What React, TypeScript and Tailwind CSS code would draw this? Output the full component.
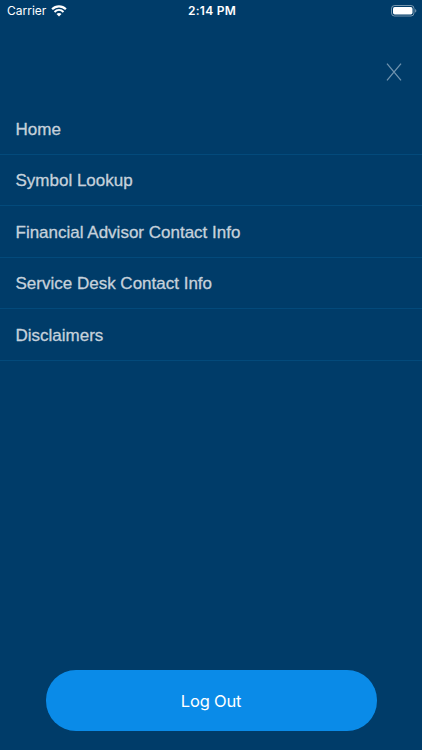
import { useState } from 'react';

const MENU_ITEMS = [
  'Home',
  'Symbol Lookup',
  'Financial Advisor Contact Info',
  'Service Desk Contact Info',
  'Disclaimers',
];

function WifiIcon() {
  return (
    <svg width="16" height="12" viewBox="0 0 16 12" fill="none" aria-hidden="true">
      <path d="M1.1 4.3C5 .5 11 .5 14.9 4.3" stroke="white" strokeWidth="2.2" />
      <path d="M3.5 6.9C6.1 4.5 9.9 4.5 12.5 6.9" stroke="white" strokeWidth="2" />
      <path d="M5.5 9C7 7.7 9 7.7 10.5 9L8 11.5Z" fill="white" />
    </svg>
  );
}

function BatteryIcon() {
  return (
    <svg width="26" height="12" viewBox="0 0 26 12" fill="none" aria-hidden="true">
      <rect x="0.5" y="0.5" width="22.5" height="10.5" rx="3" stroke="white" strokeOpacity="0.45" />
      <rect x="2" y="2" width="19.5" height="7.5" rx="1.7" fill="white" />
      <path d="M24.2 3.9c1.5.5 1.5 3.2 0 3.7Z" fill="white" fillOpacity="0.5" />
    </svg>
  );
}

function StatusBar() {
  return (
    <header className="grid h-[22px] grid-cols-3 items-center pr-[5px] pl-[7px] font-['Inter',sans-serif] text-[12px] leading-[22px] text-white">
      <div className="flex items-center gap-[5px]">
        <span>Carrier</span>
        <WifiIcon />
      </div>
      <span className="text-center font-semibold tracking-[0.25px]">2:14 PM</span>
      <div className="flex justify-end pb-px">
        <BatteryIcon />
      </div>
    </header>
  );
}

export default function App() {
  const [active, setActive] = useState<string | null>(null);

  return (
    <div className="flex h-[750px] w-full flex-col overflow-hidden bg-[#003c69] font-['Liberation_Sans',Arial,sans-serif]">
      <StatusBar />

      <div className="flex h-[81px] justify-end pt-[41px] pr-5">
        <button type="button" aria-label="Close menu" className="h-[18px] w-4">
          <svg width="16" height="18" viewBox="0 0 16 18" fill="none" aria-hidden="true">
            <path d="M1 .7 15 17.3M15 .7 1 17.3" stroke="#6f93ae" strokeWidth="1.3" />
          </svg>
        </button>
      </div>

      <nav>
        <ul>
          {MENU_ITEMS.map((item) => (
            <li key={item} className="h-[51.6px] border-b border-[#034a7b]">
              <button
                type="button"
                className="flex h-full w-full items-center pt-[2px] pl-[15.5px] text-left text-[17px] text-[#c6d1db] [-webkit-text-stroke:0.3px_#c6d1db]"
                aria-current={active === item ? 'page' : undefined}
                onClick={() => setActive(item)}
              >
                {item}
              </button>
            </li>
          ))}
        </ul>
      </nav>

      <button
        type="button"
        className="mx-[45.5px] mt-auto mb-[19px] h-[61px] rounded-[30px] bg-[#0a8be8] pt-[2px] font-['Inter',sans-serif] text-[16.5px] tracking-[-0.2px] text-white"
      >
        Log Out
      </button>
    </div>
  );
}
